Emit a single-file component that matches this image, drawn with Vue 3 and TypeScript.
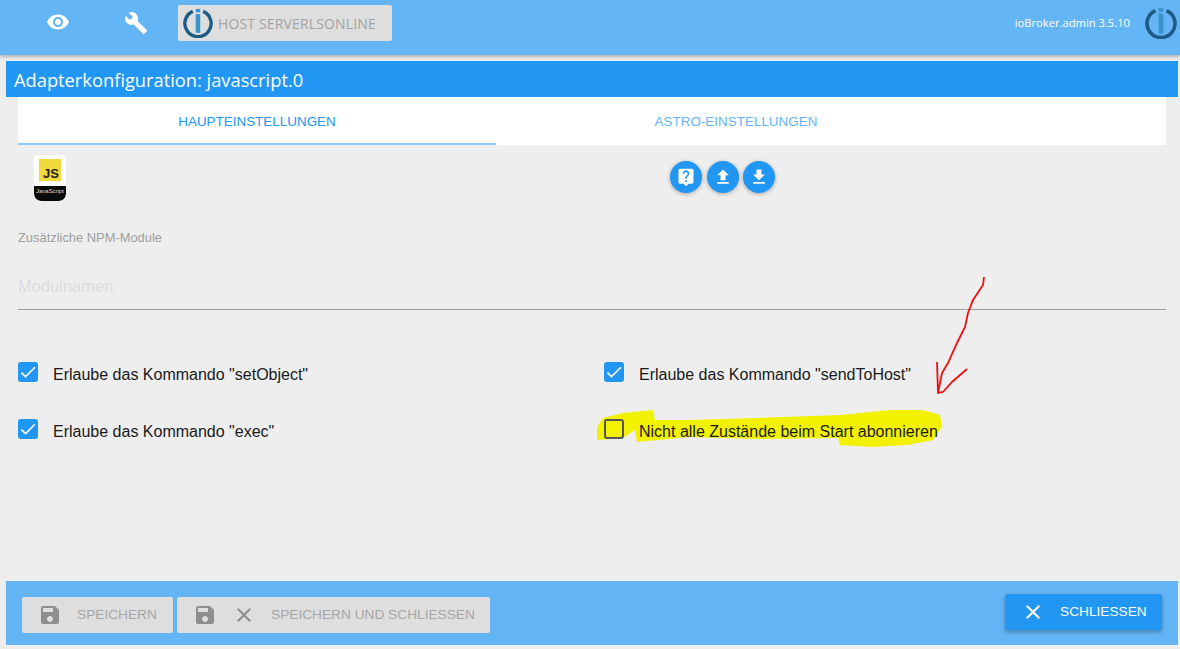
<script setup lang="ts">
interface Option {
  label: string;
  checked: boolean;
}

const tabs = ['Haupteinstellungen', 'Astro-Einstellungen'];

const leftOptions: Option[] = [
  { label: 'Erlaube das Kommando "setObject"', checked: true },
  { label: 'Erlaube das Kommando "exec"', checked: true },
];

const rightOptions: Option[] = [
  { label: 'Erlaube das Kommando "sendToHost"', checked: true },
  { label: 'Nicht alle Zustände beim Start abonnieren', checked: false },
];

const icons = {
  eye: 'M12 4.5C7 4.5 2.73 7.61 1 12c1.73 4.39 6 7.5 11 7.5s9.27-3.11 11-7.5c-1.73-4.39-6-7.5-11-7.5zM12 17c-2.76 0-5-2.24-5-5s2.24-5 5-5 5 2.24 5 5-2.24 5-5 5zm0-8c-1.66 0-3 1.34-3 3s1.34 3 3 3 3-1.34 3-3-1.34-3-3-3z',
  wrench: 'M22.7 19l-9.1-9.1c.9-2.3.4-5-1.5-6.9-2-2-5-2.4-7.4-1.3L9 6 6 9 1.6 4.7C.4 7.1.9 10.1 2.9 12.1c1.9 1.9 4.6 2.4 6.9 1.5l9.1 9.1c.4.4 1 .4 1.4 0l2.3-2.3c.5-.4.5-1.1.1-1.4z',
  save: 'M17 3H5c-1.11 0-2 .9-2 2v14c0 1.1.89 2 2 2h14c1.1 0 2-.9 2-2V7l-4-4zm-5 16c-1.66 0-3-1.34-3-3s1.34-3 3-3 3 1.34 3 3-1.34 3-3 3zm3-10H5V5h10v4z',
  close: 'M19 6.41L17.59 5 12 10.59 6.41 5 5 6.41 10.59 12 5 17.59 6.41 19 12 13.41 17.59 19 19 17.59 13.41 12 19 6.41z',
  check: 'M9 16.17L4.83 12l-1.41 1.41L9 19 21 7l-1.41-1.41z',
};

const roundButtons = [
  'M19 2H5c-1.11 0-2 .9-2 2v14c0 1.1.89 2 2 2h4l3 3 3-3h4c1.1 0 2-.9 2-2V4c0-1.1-.9-2-2-2zm-6 16h-2v-2h2v2zm2.07-7.75l-.9.92C13.45 11.9 13 12.5 13 14h-2v-.5c0-1.1.45-2.1 1.17-2.83l1.24-1.26c.37-.36.59-.86.59-1.41 0-1.1-.9-2-2-2s-2 .9-2 2H8c0-2.21 1.79-4 4-4s4 1.79 4 4c0 .88-.36 1.68-.93 2.25z',
  'M9 16h6v-6h4l-7-7-7 7h4zm-4 2h14v2H5z',
  'M19 9h-4V3H9v6H5l7 7 7-7zM5 18v2h14v-2H5z',
];
</script>

<template>
  <div class="page">
    <header class="topbar">
      <svg class="nav-icon eye" viewBox="0 0 24 24"><path :d="icons.eye" /></svg>
      <svg class="nav-icon wrench" viewBox="0 0 24 24"><path :d="icons.wrench" /></svg>
      <div class="host">
        <svg class="logo host-logo" viewBox="0 0 32 32">
          <path d="M10.5 3.6a14 14 0 1 0 11 0" />
          <rect x="13.6" y="6.5" width="4.8" height="20" />
          <rect x="13.6" y="1" width="4.8" height="3.6" />
        </svg>
        <span>HOST SERVERLSONLINE</span>
      </div>
      <span class="version">ioBroker.admin 3.5.10</span>
      <svg class="logo top-logo" viewBox="0 0 32 32">
        <path d="M10.5 3.6a14 14 0 1 0 11 0" />
        <rect x="13.6" y="6.5" width="4.8" height="20" />
        <rect x="13.6" y="1" width="4.8" height="3.6" />
      </svg>
    </header>

    <div class="title">Adapterkonfiguration: javascript.0</div>

    <main class="body">
      <nav class="tabs">
        <div
          v-for="(tab, index) in tabs"
          :key="tab"
          class="tab"
          :class="{ active: index === 0 }"
        >
          {{ tab }}
        </div>
      </nav>

      <div class="logo-row">
        <div class="adapter-logo">
          <div class="js-square">JS</div>
          <div class="js-label">JavaScript</div>
        </div>
        <div class="round-buttons">
          <button v-for="path in roundButtons" :key="path" class="round-btn">
            <svg viewBox="0 0 24 24"><path :d="path" /></svg>
          </button>
        </div>
      </div>

      <div class="npm-label">Zusätzliche NPM-Module</div>
      <div class="npm-input">Modulnamen</div>

      <div class="options">
        <div class="col left-col">
          <label v-for="opt in leftOptions" :key="opt.label" class="option">
            <span class="box checked">
              <svg viewBox="0 0 24 24"><path :d="icons.check" /></svg>
            </span>
            <span class="option-text">{{ opt.label }}</span>
          </label>
        </div>
        <div class="col">
          <label v-for="opt in rightOptions" :key="opt.label" class="option">
            <span class="box" :class="{ checked: opt.checked }">
              <svg v-if="opt.checked" viewBox="0 0 24 24"><path :d="icons.check" /></svg>
            </span>
            <span class="option-text">{{ opt.label }}</span>
          </label>
        </div>
      </div>
    </main>

    <footer class="footer">
      <button class="btn disabled save-btn">
        <svg viewBox="0 0 24 24"><path :d="icons.save" /></svg>
        <span>SPEICHERN</span>
      </button>
      <button class="btn disabled save-close-btn">
        <svg viewBox="0 0 24 24"><path :d="icons.save" /></svg>
        <svg viewBox="0 0 24 24"><path :d="icons.close" /></svg>
        <span>SPEICHERN UND SCHLIESSEN</span>
      </button>
      <button class="btn close-btn">
        <svg viewBox="0 0 24 24"><path :d="icons.close" /></svg>
        <span>SCHLIESSEN</span>
      </button>
    </footer>

    <!-- hand drawn marks on top of the screenshot -->
    <svg class="marks" viewBox="0 0 1180 649">
      <path
        class="highlight"
        d="M597 440 L597 427 L603 418 L623 413 L653 410 L655 420 L690 420 L757 418 L840 415 L890 410 L923 410 L940 415 L942 427 L933 440 L907 445 L873 447 L840 445 L838 438 L757 439 L690 437 L637 442 L635 430 L623 438 Z"
      />
      <path
        class="arrow"
        d="M984 277 L983 285 L973 300 L968 313 L965 327 L957 343 L948 363 L942 373 L938 393 M937 362 L938 393 L943 392 L952 382 L967 369"
      />
    </svg>
  </div>
</template>

<style>
body {
  background: #eeeeee;
}
</style>

<style scoped>
.page {
  position: relative;
  width: 1180px;
  height: 649px;
  overflow: hidden;
  display: flex;
  flex-direction: column;
  background: #eeeeee;
  font-family: "Liberation Sans", Arial, sans-serif;
}

.topbar {
  flex: none;
  height: 55px;
  display: flex;
  align-items: flex-start;
  background: #64b5f6;
  box-shadow: 0 2px 3px rgba(0, 0, 0, 0.25);
}

.nav-icon {
  width: 24px;
  height: 24px;
  fill: #ffffff;
  flex: none;
}

.eye {
  margin: 10px 0 0 46px;
}

.wrench {
  margin: 11px 0 0 54px;
}

.host {
  display: flex;
  align-items: center;
  width: 214px;
  height: 36px;
  margin: 5px 0 0 30px;
  padding-left: 5px;
  box-sizing: border-box;
  border-radius: 2px;
  background: #dedede;
  color: #a3a3a3;
  font-family: "Open Sans", sans-serif;
  font-size: 14px;
  letter-spacing: 0.15px;
}

.host-logo {
  width: 30px;
  height: 30px;
  margin-right: 5px;
}

.logo {
  flex: none;
}

.logo path {
  fill: none;
  stroke: #1d5a85;
  stroke-width: 3.6;
}

.logo rect {
  fill: #3a94cc;
}

.version {
  margin: 15px 0 0 auto;
  color: #ffffff;
  font-family: "Open Sans", sans-serif;
  font-size: 11.2px;
}

.top-logo {
  width: 32px;
  height: 32px;
  margin: 7px 3px 0 15px;
}

.title {
  flex: none;
  height: 36px;
  margin: 6px 2px 0 6px;
  padding-left: 8px;
  background: #2196f3;
  color: #ffffff;
  font-family: "Open Sans", sans-serif;
  font-size: 18.3px;
  line-height: 38px;
}

.body {
  flex: 1;
  padding: 0 14px 0 18px;
}

.tabs {
  display: flex;
  height: 48px;
  background: #ffffff;
}

.tab {
  width: 480px;
  height: 48px;
  text-align: center;
  text-transform: uppercase;
  color: #64b5f6;
  font-size: 13.45px;
  line-height: 49px;
  box-sizing: border-box;
}

.tab.active {
  width: 478px;
  color: #2196f3;
  border-bottom: 2px solid #90caf9;
}

.logo-row {
  display: flex;
  height: 71px;
}

.adapter-logo {
  width: 32px;
  height: 46px;
  margin: 10px 0 0 16px;
  display: flex;
  flex-direction: column;
  align-items: center;
  border-radius: 4px 4px 7px 7px;
  background: linear-gradient(#ffffff 31px, transparent 31px);
  overflow: hidden;
}

.js-square {
  width: 22px;
  height: 22px;
  margin-top: 4px;
  padding: 0 2px 1px 0;
  box-sizing: border-box;
  display: flex;
  align-items: flex-end;
  justify-content: flex-end;
  background: #f1d93e;
  color: #222222;
  font-size: 13px;
  font-weight: bold;
  line-height: 13px;
}

.js-label {
  width: 100%;
  height: 15px;
  margin-top: 5px;
  border-radius: 0 0 7px 7px;
  background: #0a0a0a;
  color: #dddddd;
  font-size: 6px;
  line-height: 11px;
  text-align: center;
}

.round-buttons {
  display: flex;
  gap: 4.5px;
  margin: 16px 0 0 604px;
}

.round-btn {
  width: 32px;
  height: 32px;
  padding: 0;
  border: 0;
  border-radius: 50%;
  display: flex;
  align-items: center;
  justify-content: center;
  background: #2196f3;
  box-shadow: 0 1px 4px rgba(0, 0, 0, 0.3);
}

.round-btn svg {
  width: 20px;
  height: 20px;
  fill: #ffffff;
}

.npm-label {
  margin-top: 15px;
  color: #9e9e9e;
  font-size: 12.9px;
  line-height: 14px;
}

.npm-input {
  height: 65px;
  box-sizing: border-box;
  padding-top: 32px;
  border-bottom: 1px solid #9e9e9e;
  color: #dcdcdc;
  font-size: 16.5px;
  line-height: 18px;
}

.options {
  display: flex;
  margin-top: 52px;
}

.col {
  display: flex;
  flex-direction: column;
  gap: 37px;
}

.left-col {
  width: 586px;
}

.option {
  display: flex;
  align-items: center;
  gap: 15px;
  height: 20px;
  position: relative;
  z-index: 2;
}

.box {
  flex: none;
  width: 20px;
  height: 20px;
  box-sizing: border-box;
  border-radius: 3px;
  border: 2px solid #555555;
}

.box.checked {
  border: 0;
  background: #2196f3;
}

.box svg {
  display: block;
  width: 20px;
  height: 20px;
  fill: #ffffff;
}

.option-text {
  margin-top: 6px;
  color: #1a1a1a;
  font-size: 16px;
}

.footer {
  flex: none;
  position: relative;
  display: flex;
  align-items: flex-start;
  height: 64px;
  margin: 0 2px 4px 6px;
  padding: 16px 16px 0;
  box-sizing: border-box;
  background: #64b5f6;
}

.btn {
  display: flex;
  align-items: center;
  height: 36px;
  padding: 0;
  border: 0;
  border-radius: 2px;
  font-family: "Liberation Sans", Arial, sans-serif;
  font-size: 13.7px;
}

.btn svg {
  width: 24px;
  height: 24px;
  flex: none;
}

.btn span {
  margin-top: -1px;
}

.disabled {
  background: #dedede;
  color: #a6a6a6;
}

.disabled svg {
  fill: #8e8e8e;
}

.save-btn {
  width: 151px;
  padding-left: 16px;
}

.save-btn span {
  margin-left: 15px;
}

.save-close-btn {
  width: 313px;
  margin-left: 4px;
  padding-left: 16px;
}

.save-close-btn svg + svg {
  margin-left: 15px;
}

.save-close-btn span {
  margin-left: 15px;
}

.close-btn {
  width: 157px;
  margin: -3px 0 0 auto;
  padding-left: 16px;
  background: #2196f3;
  color: #ffffff;
  box-shadow: 0 2px 4px rgba(0, 0, 0, 0.3);
}

.close-btn svg {
  fill: #ffffff;
}

.close-btn span {
  margin-left: 15px;
}

.marks {
  position: absolute;
  left: 0;
  top: 0;
  width: 1180px;
  height: 649px;
  pointer-events: none;
}

.highlight {
  fill: #f2f200;
}

.arrow {
  fill: none;
  stroke: #ee1111;
  stroke-width: 1.8;
}
</style>
